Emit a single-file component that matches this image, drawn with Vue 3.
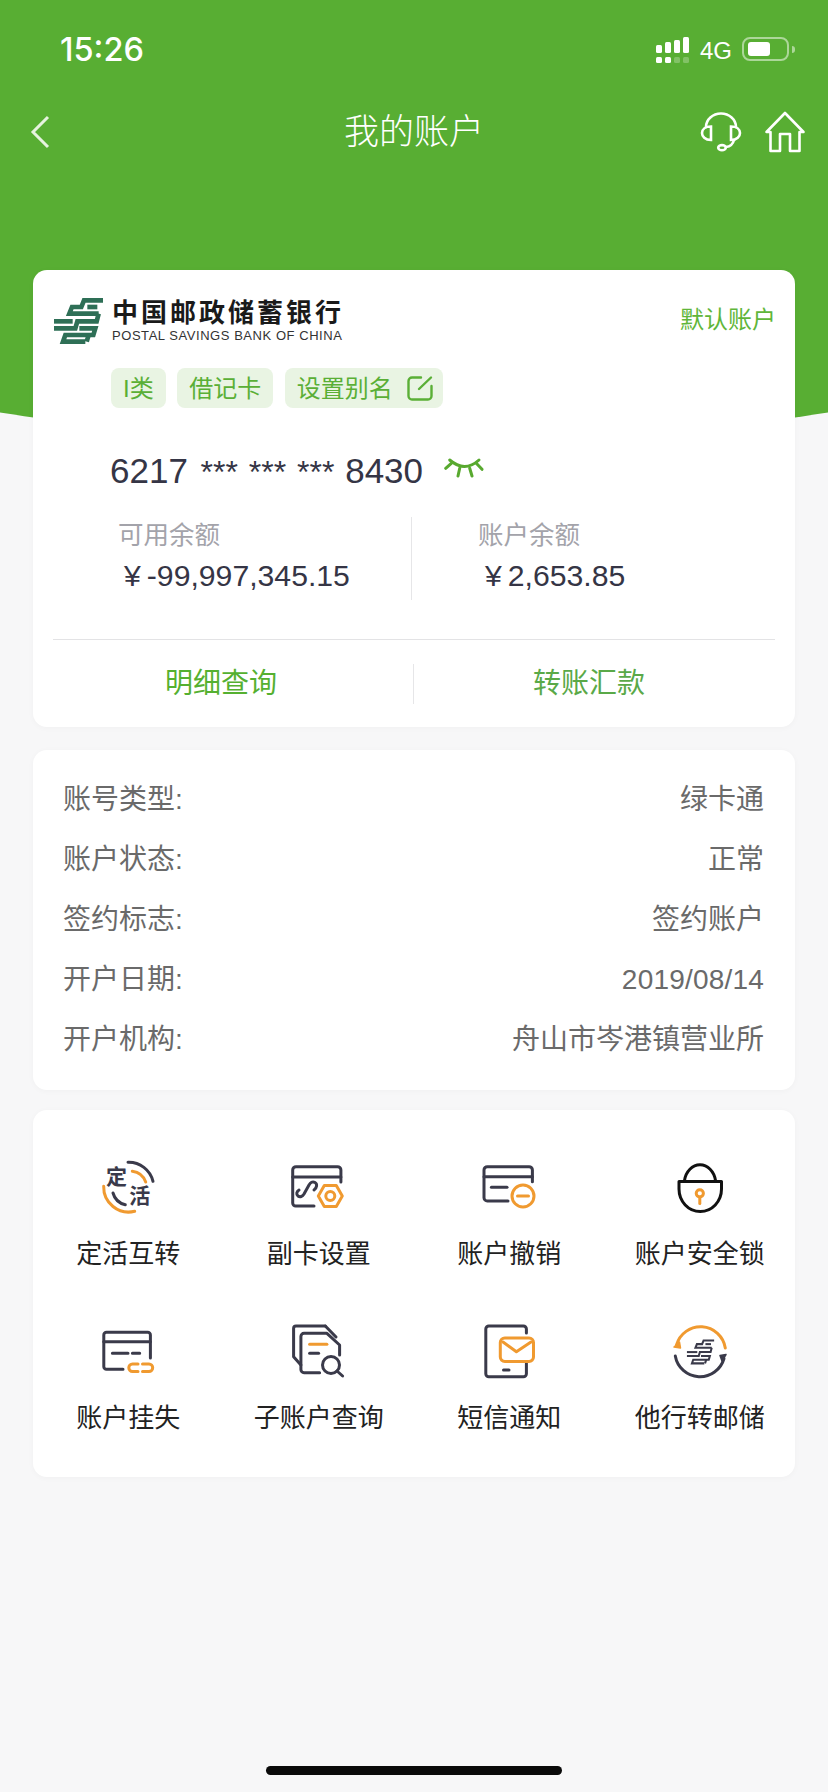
<template>
  <div class="page">
    <!-- Green header -->
    <header class="hero">
      <div class="status">
        <span class="time">15:26</span>
        <div class="status-right">
          <svg class="signal" width="34" height="26" viewBox="0 0 34 26">
            <rect v-for="b in signalBars" :key="b.x" :x="b.x" :y="b.y" width="6" :height="16 - b.y" rx="1.5" fill="#fff" />
            <rect v-for="(d, i) in signalBars" :key="'d' + d.x" :x="d.x" y="20" width="6" height="6" rx="1.5" fill="#fff" :opacity="i < 2 ? 1 : 0.25" />
          </svg>
          <span class="net">4G</span>
          <div class="battery"><div class="battery-fill"></div></div>
          <div class="battery-nub"></div>
        </div>
      </div>

      <nav class="nav">
        <div class="nav-left">
          <svg width="22" height="34" viewBox="0 0 22 34" fill="none" stroke="#e6f3df" stroke-width="3">
            <path d="M19 2 L4 17 L19 32" />
          </svg>
        </div>
        <div class="nav-title">我的账户</div>
        <div class="nav-right">
          <svg width="42" height="42" viewBox="0 0 42 42" fill="none" stroke="#fff" stroke-width="2.6" stroke-linecap="round">
            <path d="M6 16 A15 13.500 0 0 1 36 16" />
            <path d="M11 15.500 C5 15.500 2 18.500 2 22 C2 25.500 5 29 11 29 Z" />
            <path d="M31 15.500 C37 15.500 40 18.500 40 22 C40 25.500 37 29 31 29 Z" />
            <path d="M34 29 C33 33 30 35.500 26 36" />
            <ellipse cx="22" cy="36.700" rx="3.800" ry="2.600" />
          </svg>
          <svg width="42" height="42" viewBox="0 0 42 42" fill="none" stroke="#fff" stroke-width="2.6" stroke-linejoin="round">
            <path d="M21 2 L39.500 21 L35.500 21 V40 H26 V23 H16 V40 H6.500 V21 L2.500 21 Z" />
          </svg>
        </div>
      </nav>
    </header>

    <!-- Account card -->
    <section class="card account">
      <div class="brand-row">
        <div class="brand">
          <svg class="post-logo" width="60" height="56" viewBox="0 0 180 168" fill="none" stroke="#2e6f56" stroke-width="14">
            <path v-for="d in postLogo" :key="d" :d="d" />
          </svg>
          <div class="brand-text">
            <div class="brand-cn">中国邮政储蓄银行</div>
            <div class="brand-en">POSTAL SAVINGS BANK OF CHINA</div>
          </div>
        </div>
        <span class="default-tag">默认账户</span>
      </div>

      <div class="tags">
        <span class="tag">I类</span>
        <span class="tag">借记卡</span>
        <span class="tag tag-edit">
          设置别名
          <svg width="26" height="26" viewBox="0 0 26 26" fill="none" stroke="#5aaf36" stroke-width="2.4" stroke-linecap="round">
            <path d="M14 2.500H5A3.500 3.500 0 0 0 1.500 6V21A3.500 3.500 0 0 0 5 24.500H21A3.500 3.500 0 0 0 24.500 21V11" />
            <path d="M24 2.500L12 14" />
          </svg>
        </span>
      </div>

      <div class="card-no">
        <span>6217 <span class="stars">*** *** ***</span> 8430</span>
        <svg width="40" height="22" viewBox="0 0 40 22" fill="none" stroke="#58a92f" stroke-width="3" stroke-linecap="round">
          <path d="M5.700 3 Q20.700 16 35 3" />
          <path d="M7.300 6.300L1.700 11.300M15.700 11.300L14 19M25.700 11.300L28 19M32.300 6.300L38 12.300" />
        </svg>
      </div>

      <div class="balances">
        <div class="balance left">
          <div class="balance-label">可用余额</div>
          <div class="balance-value"><span class="yen">¥</span>-99,997,345.15</div>
        </div>
        <div class="balance right">
          <div class="balance-label">账户余额</div>
          <div class="balance-value"><span class="yen">¥</span>2,653.85</div>
        </div>
      </div>

      <div class="hr"></div>

      <div class="actions">
        <div class="action first">明细查询</div>
        <div class="action second">转账汇款</div>
      </div>
    </section>

    <!-- Details -->
    <section class="card details">
      <div v-for="row in details" :key="row[0]" class="detail-row">
        <span>{{ row[0] }}:</span>
        <span :class="{ date: row[1].startsWith('2019') }">{{ row[1] }}</span>
      </div>
    </section>

    <!-- Functions -->
    <section class="card menu">
      <div v-for="item in menu" :key="item.label" class="menu-item">
        <svg width="70" height="70" viewBox="0 0 70 70" fill="none" stroke-width="3" stroke-linecap="round" stroke-linejoin="round">
          <path v-for="(p, i) in item.paths" :key="i" :d="p.d" :class="[p.c, { solid: p.solid }]" />
          <text v-for="t in item.texts" :key="t.s" :x="t.x" :y="t.y" class="icon-text" text-anchor="middle">{{ t.s }}</text>
          <g v-if="item.logo" transform="translate(18.600 19.800) scale(0.185)" class="mini-logo">
            <path v-for="d in postLogo" :key="d" :d="d" />
          </g>
        </svg>
        <div class="menu-label">{{ item.label }}</div>
      </div>
    </section>

    <div class="home-bar"></div>
  </div>
</template>

<script setup>
const signalBars = [
  { x: 0, y: 8 },
  { x: 9, y: 5 },
  { x: 18, y: 3 },
  { x: 27, y: 0 }
]

// China Post emblem, drawn as stepped rails
const postLogo = [
  'M165 25H108L100 45H72L64 65H152',
  'M148 45H118',
  'M152 65L146 88H88L82 109H18',
  'M18 88H74',
  'M94 109H142L136 129H52L45 149H112',
  'M122 129L116 149'
]

const details = [
  ['账号类型', '绿卡通'],
  ['账户状态', '正常'],
  ['签约标志', '签约账户'],
  ['开户日期', '2019/08/14'],
  ['开户机构', '舟山市岑港镇营业所']
]

const circle = (cx, cy, r) => `M${cx - r} ${cy}a${r} ${r} 0 1 0 ${r * 2} 0a${r} ${r} 0 1 0 ${-r * 2} 0Z`

const menu = [
  {
    label: '定活互转',
    paths: [
      { d: 'M35 10.300A25 25 0 0 1 60 29.300', c: 'dark' },
      { d: 'M39.300 19.300A16.500 16.500 0 0 1 52.700 30', c: 'orange' },
      { d: 'M10.700 34.300A25 25 0 0 0 41.700 59.300', c: 'orange' },
      { d: 'M20 41A16.500 16.500 0 0 0 32.300 52.700', c: 'dark' }
    ],
    texts: [
      { s: '定', x: 23.500, y: 32 },
      { s: '活', x: 46.800, y: 51 }
    ]
  },
  {
    label: '副卡设置',
    paths: [
      { d: 'M56.900 30V18A3.300 3.300 0 0 0 53.600 14.700H12A3.300 3.300 0 0 0 8.700 18V51A3 3 0 0 0 11.700 54H30', c: 'dark' },
      { d: 'M8.700 25H56.900', c: 'dark' },
      { d: 'M30 38C33 36 33.500 32 31 30.500C28.500 29 26.500 30.500 25 33L20 42C18.500 44.500 16 45.500 14 44C12 42.500 12.500 39.500 15 38', c: 'dark' },
      { d: 'M34.300 44L40.300 33.600H52.300L58.300 44L52.300 54.400H40.300Z', c: 'orange' },
      { d: circle(46.300, 44, 4.500), c: 'orange' }
    ]
  },
  {
    label: '账户撤销',
    paths: [
      { d: 'M58.400 29.700V18A3.300 3.300 0 0 0 55.100 14.700H13.300A3.300 3.300 0 0 0 10 18V45.700A3.300 3.300 0 0 0 13.300 49H34', c: 'dark' },
      { d: 'M10 24.700H58.400', c: 'dark' },
      { d: 'M17.400 35.300H33', c: 'dark' },
      { d: circle(49, 44, 11), c: 'orange' },
      { d: 'M43.500 44H54.500', c: 'orange' }
    ]
  },
  {
    label: '账户安全锁',
    paths: [
      { d: 'M14 29.500H56.500V37A21.250 22.500 0 0 1 14 37Z', c: 'black' },
      { d: 'M19.500 28.500A15.750 19 0 0 1 50.500 28.500', c: 'black' },
      { d: circle(34.800, 41.300, 3.600), c: 'orange' },
      { d: 'M34.800 45V51.500', c: 'orange' }
    ]
  },
  {
    label: '账户挂失',
    paths: [
      { d: 'M57.400 42V19A2.700 2.700 0 0 0 54.700 16.300H13.500A2.700 2.700 0 0 0 10.800 19V50.500A2.700 2.700 0 0 0 13.500 53.300H30', c: 'dark' },
      { d: 'M10.800 25.700H57.400', c: 'dark' },
      { d: 'M19.400 37.300H35M39.400 37.300H46.700', c: 'dark' },
      { d: 'M45 48H39.500A3.700 3.700 0 0 0 39.500 55.400H45', c: 'orange' },
      { d: 'M49.500 48H56A3.700 3.700 0 0 1 56 55.400H49.500', c: 'orange' }
    ]
  },
  {
    label: '子账户查询',
    paths: [
      { d: 'M41.300 10H12A2.400 2.400 0 0 0 9.600 12.400V40.700L16.900 49', c: 'dark' },
      { d: 'M41.300 10L52 21', c: 'dark' },
      { d: 'M35.600 56.700H20A3.100 3.100 0 0 1 16.900 53.600V20.400A3.100 3.100 0 0 1 20 17.300H42.900L55.600 29V39', c: 'dark' },
      { d: 'M25.600 28.300H42.900', c: 'orange' },
      { d: 'M25.600 37.300H34.600', c: 'dark' },
      { d: circle(47, 49, 8.500), c: 'dark' },
      { d: 'M53 55L58.600 60', c: 'dark' }
    ]
  },
  {
    label: '短信通知',
    paths: [
      { d: 'M52.400 17V13A3 3 0 0 0 49.400 10H14.800A3 3 0 0 0 11.800 13V57.700A3 3 0 0 0 14.800 60.700H49.400A3 3 0 0 0 52.400 57.700V47.300', c: 'dark' },
      { d: 'M29.500 54H35', c: 'dark' },
      { d: 'M30.800 22H55A4.500 4.500 0 0 1 59.500 26.500V41A4.500 4.500 0 0 1 55 45.500H30.800A4.500 4.500 0 0 1 26.300 41V26.500A4.500 4.500 0 0 1 30.800 22Z', c: 'orange' },
      { d: 'M29 26L42.400 35.700L57 26', c: 'orange' }
    ]
  },
  {
    label: '他行转邮储',
    logo: true,
    paths: [
      { d: 'M11.500 29A25 25 0 0 1 60.300 32', c: 'orange' },
      { d: 'M9 31L15.500 32L14.500 26Z', c: 'orange', solid: true },
      { d: 'M10.300 40A25 25 0 0 0 59 42.500', c: 'dark' },
      { d: 'M61 38.500L55 39.500L57 45Z', c: 'dark', solid: true }
    ]
  }
]
</script>

<style>
html,
body {
  margin: 0;
  background: #f7f7f8;
}
</style>

<style scoped>
.page {
  width: 828px;
  min-height: 1792px;
  display: flex;
  flex-direction: column;
  background: #f7f7f8;
  font-family: "Liberation Sans", "Noto Sans CJK SC", sans-serif;
}

.hero {
  height: 445px;
  margin-bottom: -175px;
  background: #58ae33;
  color: #fff;
  clip-path: ellipse(2657px 2657px at 414px -2212px);
  flex-shrink: 0;
}

.status {
  height: 97px;
  padding: 0 33px 0 60px;
  display: flex;
  align-items: flex-start;
  justify-content: space-between;
  box-sizing: border-box;
}

.time {
  margin-top: 30px;
  font-family: Inter, "Liberation Sans", sans-serif;
  font-size: 32.500px;
  line-height: 39px;
  font-weight: 500;
}

.status-right {
  margin-top: 37px;
  display: flex;
  align-items: flex-start;
}

.net {
  margin-left: 10px;
  font-size: 24px;
  line-height: 27px;
}

.battery {
  width: 47px;
  height: 24px;
  margin-left: 10px;
  padding: 3px 4px;
  border: 2px solid rgba(255, 255, 255, 0.5);
  border-radius: 8px;
  box-sizing: border-box;
}

.battery-fill {
  width: 22px;
  height: 14px;
  background: #fff;
  border-radius: 3px;
}

.battery-nub {
  width: 3px;
  height: 7px;
  margin: 9px 0 0 3px;
  background: rgba(255, 255, 255, 0.5);
  border-radius: 0 3px 3px 0;
}

.nav {
  display: grid;
  grid-template-columns: 1fr auto 1fr;
  align-items: center;
  height: 70px;
}

.nav-left {
  padding-left: 29px;
  display: flex;
}

.nav-title {
  font-size: 35px;
  line-height: 40px;
  font-weight: 300;
}

.nav-right {
  display: flex;
  justify-content: flex-end;
  gap: 22px;
  padding-right: 22px;
}

.card {
  width: 762px;
  margin: 0 33px;
  background: #fff;
  border-radius: 14px;
  box-shadow: 0 1px 6px rgba(0, 0, 0, 0.03);
  position: relative;
  flex-shrink: 0;
}

.account {
  height: 457px;
}

.brand-row {
  height: 56px;
  padding: 22px 19px 0 15px;
  display: flex;
  justify-content: space-between;
  align-items: center;
}

.brand {
  display: flex;
  align-items: center;
  gap: 4px;
}

.post-logo {
  display: block;
}

.brand-cn {
  font-size: 26px;
  line-height: 30px;
  font-weight: 700;
  letter-spacing: 3px;
  color: #1a1a1a;
  white-space: nowrap;
}

.brand-en {
  font-size: 13px;
  line-height: 15px;
  color: #333;
  letter-spacing: 0.55px;
  white-space: nowrap;
}

.default-tag {
  margin-bottom: 6px;
  font-size: 24px;
  color: #5fb63a;
}

.tags {
  display: flex;
  gap: 11.500px;
  margin: 20px 0 0 78px;
}

.tag {
  height: 40px;
  padding: 0 12px 3px;
  display: flex;
  align-items: center;
  background: #e9f4e3;
  border-radius: 8px;
  font-size: 24px;
  color: #5aaf36;
  box-sizing: border-box;
}

.tag-edit {
  gap: 14px;
  padding-right: 10px;
}

.tag-edit svg {
  margin-top: 3px;
}

.card-no {
  margin: 43px 0 0 77px;
  display: flex;
  align-items: center;
  gap: 21px;
  height: 40px;
  font-size: 35px;
  color: #353545;
  white-space: nowrap;
}

.card-no svg {
  margin-bottom: 6px;
}

.stars {
  margin: 0 1px 0 3px;
  font-size: 32px;
  word-spacing: 2px;
}

.balances {
  display: flex;
  margin-top: 26px;
  height: 83px;
}

.balance {
  box-sizing: border-box;
}

.balance.left {
  width: 378px;
  padding-left: 85px;
}

.balance.right {
  flex: 1;
  padding-left: 66px;
  border-left: 1px solid #e6e6e8;
}

.balance-label {
  margin-top: 2px;
  font-size: 25.500px;
  line-height: 32px;
  color: #a3a3aa;
}

.balance-value {
  margin: 7px 0 0 6px;
  font-size: 30.200px;
  line-height: 36px;
  color: #353545;
  white-space: nowrap;
}

.balance.right .balance-value {
  margin-left: 7px;
}

.yen {
  margin-right: 6px;
}

.hr {
  height: 1px;
  margin: 39px 20px 0;
  background: #e3e3e5;
}

.actions {
  height: 87px;
  display: flex;
  align-items: center;
}

.action {
  height: 40px;
  line-height: 40px;
  font-size: 28px;
  text-align: center;
  box-sizing: border-box;
}

.action.first {
  width: 380px;
  padding-right: 4px;
  color: #55b030;
}

.action.second {
  flex: 1;
  padding-right: 31px;
  border-left: 1px solid #e6e6e8;
  color: #5aa948;
}

.details {
  margin-top: 23px;
  padding: 20px 31px 20px 30px;
  box-sizing: border-box;
  height: 340px;
}

.detail-row {
  display: flex;
  justify-content: space-between;
  height: 60px;
  line-height: 60px;
  font-size: 28px;
  color: #6a6a6a;
}

.date {
  letter-spacing: 0.2px;
}

.menu {
  margin-top: 20px;
  padding: 42px 0 41px;
  display: grid;
  grid-template-columns: repeat(4, 1fr);
  row-gap: 44px;
}

.menu-item {
  display: flex;
  flex-direction: column;
  align-items: center;
}

.menu-item svg {
  display: block;
}

.menu-label {
  margin-top: 14px;
  font-size: 26px;
  line-height: 36px;
  color: #222;
  white-space: nowrap;
}

.dark {
  stroke: #3a3a4a;
}

.orange {
  stroke: #f09a30;
}

.black {
  stroke: #111;
}

.solid {
  stroke-width: 1.500;
}

.solid.dark {
  fill: #3a3a4a;
}

.solid.orange {
  fill: #f09a30;
}

.icon-text {
  font-size: 21px;
  font-weight: 700;
  fill: #3a3a4a;
  stroke: none;
  font-family: "Noto Sans CJK SC", sans-serif;
}

.mini-logo {
  stroke: #3a3a4a;
  stroke-width: 11;
  stroke-linecap: butt;
  stroke-linejoin: miter;
}

.home-bar {
  width: 296px;
  height: 9px;
  margin: auto auto 17px;
  background: #0a0a0a;
  border-radius: 5px;
}
</style>
